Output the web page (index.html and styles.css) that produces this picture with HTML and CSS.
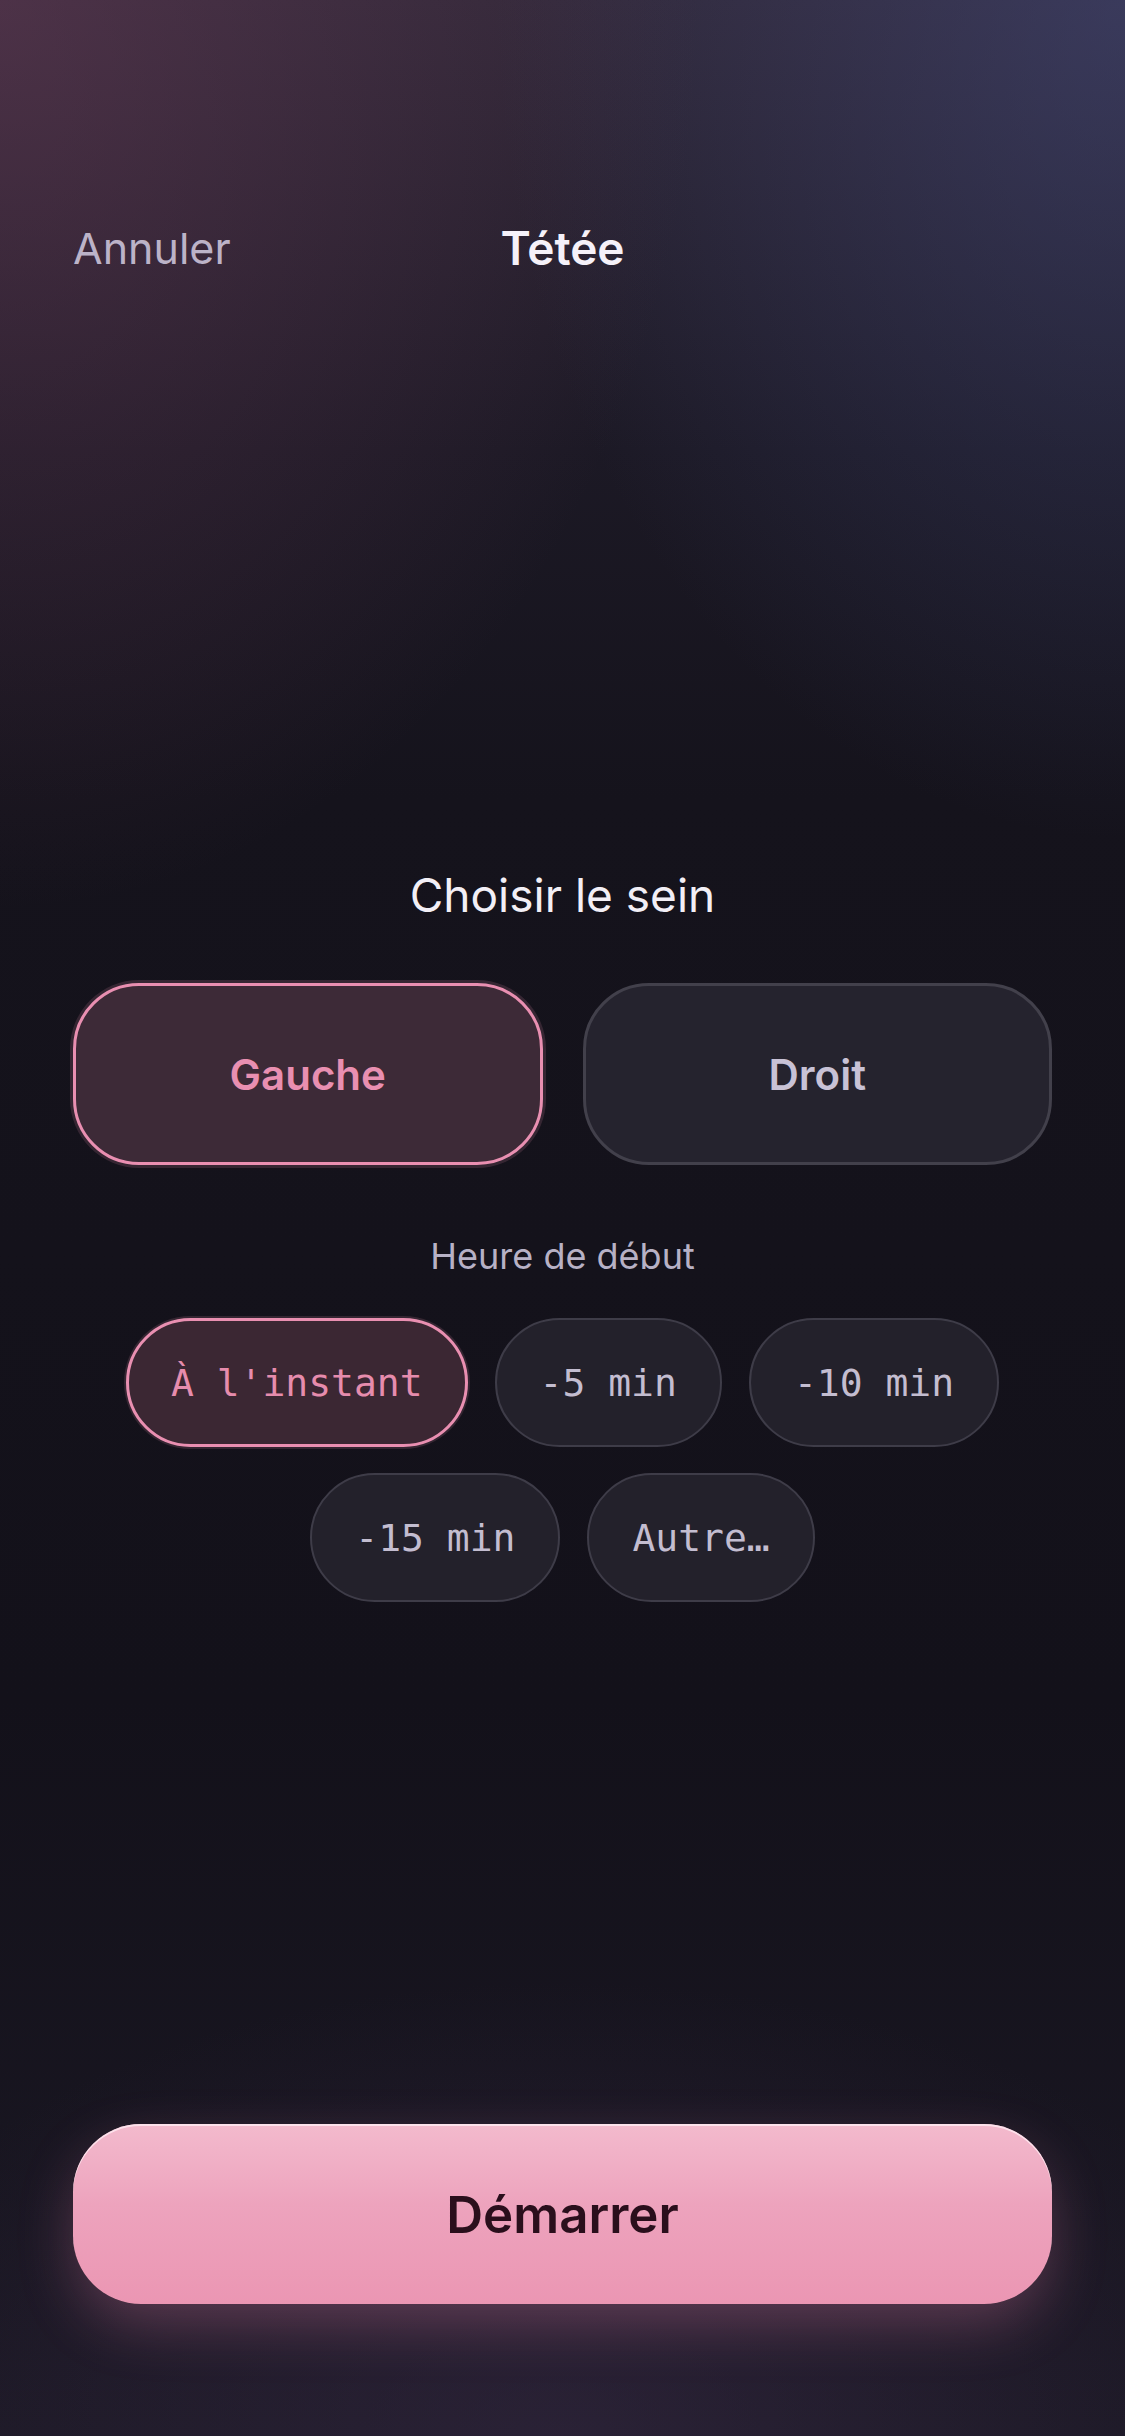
FILE: index.html
```html
<!DOCTYPE html>
<html lang="fr">

<head>
    <meta charset="UTF-8">
    <title>Tétée</title>
    <link rel="stylesheet" href="styles.css">
</head>

<body>
    <div class="screen">
        <header class="topbar">
            <button class="cancel-btn">Annuler</button>
            <h1 class="title">Tétée</h1>
            <span></span>
        </header>

        <main class="sheet">
            <h2 class="section-title">Choisir le sein</h2>
            <div class="side-picker">
                <button class="side-btn is-active">Gauche</button>
                <button class="side-btn">Droit</button>
            </div>

            <p class="label">Heure de début</p>
            <div class="chips">
                <button class="chip is-active">À l'instant</button>
                <button class="chip">-5 min</button>
                <button class="chip">-10 min</button>
                <button class="chip">-15 min</button>
                <button class="chip">Autre…</button>
            </div>
        </main>

        <footer class="actions">
            <button class="start-btn">Démarrer</button>
        </footer>
    </div>
</body>

</html>
```

FILE: styles.css
```css
* {
    box-sizing: border-box;
}

html,
body {
    margin: 0;
    padding: 0;
}

body {
    font-family: Inter, "Noto Sans", sans-serif;
    color: #f3f0f7;
    background:
        radial-gradient(1000px 1300px at 0% 0%, rgba(120, 65, 95, 0.4), transparent 70%),
        radial-gradient(900px 1200px at 100% 0%, rgba(70, 80, 135, 0.45), transparent 70%),
        radial-gradient(1100px 650px at 50% 100%, rgba(60, 45, 75, 0.45), transparent 70%),
        linear-gradient(180deg, #302838 0px, #1c1925 450px, #15131c 800px, #13111a 1700px, #1b1824 2436px);
    background-color: #13111a;
}

button {
    font-family: inherit;
    cursor: pointer;
    margin: 0;
}

.screen {
    min-height: 2436px;
    display: flex;
    flex-direction: column;
    padding: 0 73px;
}

/* top bar */
.topbar {
    display: grid;
    grid-template-columns: 1fr auto 1fr;
    align-items: center;
    padding-top: 220px;
}

.cancel-btn {
    justify-self: start;
    background: none;
    border: none;
    padding: 0;
    font-size: 43px;
    line-height: 56px;
    color: #bcb3c8;
}

.title {
    margin: 0;
    font-size: 46px;
    line-height: 56px;
    font-weight: 600;
    color: #f5f1f9;
}

/* main part */
.sheet {
    margin-top: 591px;
    display: flex;
    flex-direction: column;
    align-items: center;
}

.section-title {
    margin: 0;
    font-size: 46px;
    line-height: 56px;
    font-weight: 400;
    color: #f2eff6;
}

.side-picker {
    width: 100%;
    margin-top: 60px;
    display: grid;
    grid-template-columns: 1fr 1fr;
    gap: 40px;
}

.side-btn {
    height: 182px;
    border-radius: 66px;
    border: 3px solid #42404b;
    background: #25232e;
    color: #c8c2d6;
    font-size: 42px;
    font-weight: 600;
}

.side-btn.is-active {
    border-color: #e98fb1;
    background: #3d2a37;
    color: #e98fb1;
    box-shadow: 0 0 0 3px rgba(233, 143, 177, 0.16);
}

.label {
    margin: 69px 0 0;
    font-size: 36px;
    line-height: 44px;
    color: #b7b1c5;
}

.chips {
    width: 100%;
    margin-top: 40px;
    display: flex;
    flex-wrap: wrap;
    justify-content: center;
    gap: 26px 27px;
}

.chip {
    height: 129px;
    padding: 0 43px;
    border-radius: 999px;
    border: 2px solid #3e3c48;
    background: #23212b;
    color: #c3bdd0;
    font-family: "DejaVu Sans Mono", "Liberation Mono", monospace;
    font-size: 38px;
    white-space: nowrap;
}

.chip.is-active {
    padding: 0 42px;
    border: 3px solid #e98fb1;
    background: #3b2733;
    color: #e68cad;
    box-shadow: 0 0 0 2px rgba(233, 143, 177, 0.16);
}

/* bottom button */
.actions {
    margin-top: auto;
    padding-bottom: 132px;
}

.start-btn {
    width: 100%;
    height: 180px;
    border: none;
    border-radius: 68px;
    background: linear-gradient(180deg, #f3bacd 0%, #eda3bd 45%, #eb96b3 100%);
    box-shadow:
        inset 0 2px 0 rgba(255, 235, 242, 0.8),
        0 22px 60px -6px rgba(232, 130, 170, 0.32);
    color: #2a0f1c;
    font-size: 51px;
    font-weight: 600;
}
```
